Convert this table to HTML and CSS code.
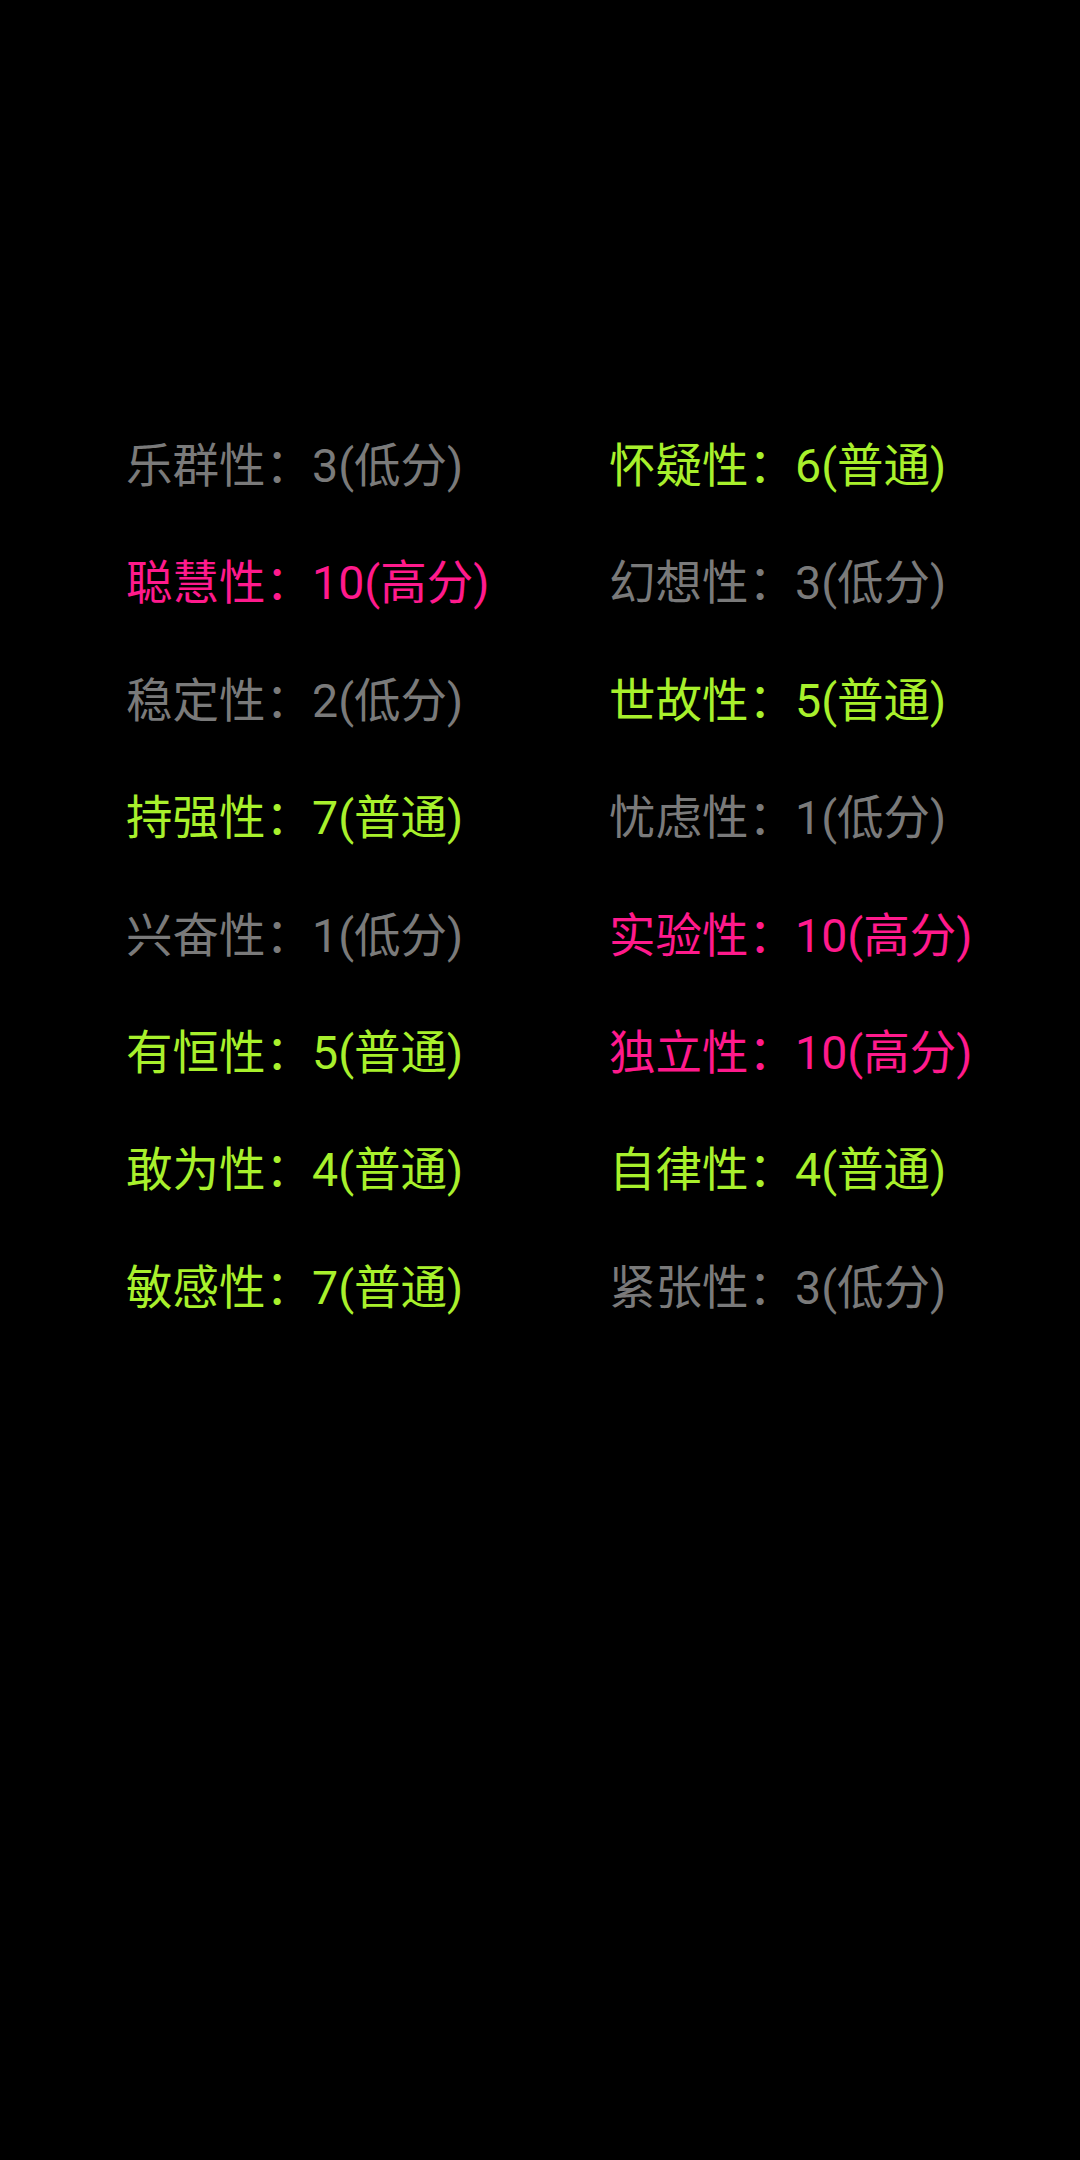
FILE: index.html
```html
<!DOCTYPE html>
<html lang="zh-CN">
<head>
<meta charset="utf-8">
<link rel="stylesheet" href="styles.css">
</head>
<body>
<div class="grid">
  <div class="item low">乐群性：3(低分)</div>
  <div class="item mid">怀疑性：6(普通)</div>
  <div class="item high">聪慧性：10(高分)</div>
  <div class="item low">幻想性：3(低分)</div>
  <div class="item low">稳定性：2(低分)</div>
  <div class="item mid">世故性：5(普通)</div>
  <div class="item mid">持强性：7(普通)</div>
  <div class="item low">忧虑性：1(低分)</div>
  <div class="item low">兴奋性：1(低分)</div>
  <div class="item high">实验性：10(高分)</div>
  <div class="item mid">有恒性：5(普通)</div>
  <div class="item high">独立性：10(高分)</div>
  <div class="item mid">敢为性：4(普通)</div>
  <div class="item mid">自律性：4(普通)</div>
  <div class="item mid">敏感性：7(普通)</div>
  <div class="item low">紧张性：3(低分)</div>
</div>
</body>
</html>
```
FILE: styles.css
```css
html, body {
  margin: 0;
  padding: 0;
  background: #000;
  height: 100%;
}
body {
  width: 1080px;
  height: 2160px;
  font-family: Roboto, "Noto Sans CJK SC", sans-serif;
}
.grid {
  display: grid;
  grid-template-columns: 483px 483px;
  grid-auto-rows: 117.4px;
  padding: 408px 0 0 126px;
}
.item {
  font-size: 46.5px;
  line-height: 117.4px;
  white-space: nowrap;
}
.low { color: #7a7a7a; }
.mid { color: #a8f02c; }
.high { color: #ff1a8c; }
```
